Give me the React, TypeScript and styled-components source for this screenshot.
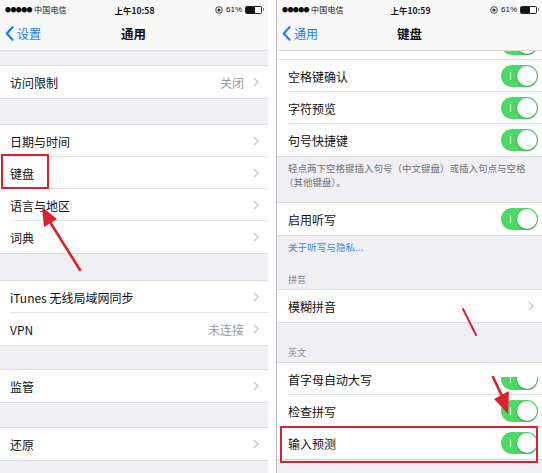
import React from 'react'
import styled, { createGlobalStyle } from 'styled-components'

const GlobalStyle = createGlobalStyle`
  html, body {
    margin: 0;
    padding: 0;
    background: #fff;
  }
  body {
    font-family: 'Liberation Sans', 'Noto Sans CJK SC', sans-serif;
    -webkit-font-smoothing: antialiased;
  }
`

const Screen = styled.div`
  position: relative;
  display: flex;
  width: 542px;
  height: 473px;
  overflow: hidden;
  background: #fff;
`

const Phone = styled.div<{ $width: number; $edge?: boolean }>`
  position: relative;
  display: flex;
  flex-direction: column;
  width: ${(p) => p.$width}px;
  flex-shrink: 0;
  background: #efeff4;
  overflow: hidden;
  ${(p) => (p.$edge ? 'border-left: 1px solid #b9b9bc;' : '')}
`

const Spacer = styled.div`
  width: 8px;
  flex-shrink: 0;
  background: #fff;
`

const Header = styled.header`
  display: flex;
  flex-direction: column;
  height: 50px;
  flex-shrink: 0;
  background: #f8f8f9;
  box-shadow: 0 1px 0 #dcdce0;
  position: relative;
  z-index: 2;
`

const StatusBar = styled.div`
  display: grid;
  grid-template-columns: 1fr auto 1fr;
  align-items: center;
  height: 20px;
  padding: 0 4px 0 5px;
  font-size: 8px;
  color: #111;
`

const Carrier = styled.div`
  display: flex;
  align-items: center;
  gap: 2px;
  font-family: 'Noto Sans CJK SC', sans-serif;
  letter-spacing: 0.2px;
`

const Dots = styled.span`
  font-size: 6px;
  letter-spacing: -0.6px;
`

const Clock = styled.div`
  font-weight: bold;
  font-size: 8.5px;
  font-family: 'Noto Sans CJK SC', sans-serif;
`

const Power = styled.div`
  display: flex;
  align-items: center;
  justify-content: flex-end;
  gap: 3px;
`

const Battery = styled.span`
  position: relative;
  width: 15px;
  height: 6px;
  border: 1px solid #222;
  border-radius: 1.5px;
  background: linear-gradient(to right, #111 62%, #fff 62%);
  margin-right: 2px;

  &::after {
    content: '';
    position: absolute;
    right: -3px;
    top: 1.5px;
    width: 1.5px;
    height: 3px;
    background: #777;
  }
`

const NavBar = styled.div`
  display: grid;
  grid-template-columns: 1fr auto 1fr;
  align-items: center;
  height: 30px;
  padding: 0 6px 2px 5px;
`

const Back = styled.div`
  display: flex;
  align-items: center;
  gap: 3px;
  color: #1a7cf5;
  font-size: 12px;
  font-family: 'Noto Sans CJK SC', sans-serif;
`

const Title = styled.div`
  font-size: 12.5px;
  font-weight: bold;
  font-family: 'Noto Sans CJK SC', sans-serif;
  color: #111;
`

const Band = styled.div<{ $h: number }>`
  height: ${(p) => p.$h}px;
  flex-shrink: 0;
`

const Group = styled.ul`
  list-style: none;
  margin: 0;
  padding: 0;
  background: #fff;
  box-shadow: 0 -1px 0 #dcdce0, 0 1px 0 #dcdce0;
  flex-shrink: 0;
`

const Row = styled.li<{ $inset: number }>`
  position: relative;
  display: flex;
  align-items: center;
  height: 32px;
  padding: 0 5px 0 ${(p) => p.$inset}px;
  font-family: 'Noto Sans CJK SC', sans-serif;
  font-size: 12px;
  color: #111;

  &:not(:last-child)::after {
    content: '';
    position: absolute;
    left: ${(p) => p.$inset}px;
    right: 0;
    bottom: 0;
    height: 1px;
    background: #e3e3e6;
  }
`

const Label = styled.span`
  flex: 1;
`

const Detail = styled.span`
  color: #9a9a9f;
  margin-right: 7px;
`

const ChevronBox = styled.span`
  display: flex;
  width: 10px;
  justify-content: center;
  margin-right: 2px;
`

const PeekRow = styled.div`
  position: relative;
  display: flex;
  justify-content: flex-end;
  height: 9px;
  padding-right: 5px;
  overflow: hidden;
  background: #fff;
  flex-shrink: 0;
  border-bottom: 1px solid #e3e3e6;
`

const Toggle = styled.span<{ $clipTop?: number; $lift?: number }>`
  position: relative;
  display: block;
  width: 37px;
  height: 22px;
  border-radius: 11px;
  background: #4cd964;
  flex-shrink: 0;
  margin-top: ${(p) => (p.$lift ? `-${p.$lift}px` : '0')};
  ${(p) => (p.$clipTop ? `clip-path: inset(${p.$clipTop}px 0 0 0);` : '')}

  &::before {
    content: '';
    position: absolute;
    left: 9px;
    top: 7px;
    width: 1px;
    height: 8px;
    background: rgba(255, 255, 255, 0.8);
  }

  &::after {
    content: '';
    position: absolute;
    right: 1px;
    top: 1px;
    width: 20px;
    height: 20px;
    border-radius: 50%;
    background: #fff;
    box-shadow: 0 1px 2px rgba(0, 0, 0, 0.3), 0 0 0 0.5px rgba(0, 0, 0, 0.08);
  }
`

const Note = styled.div<{ $h: number }>`
  display: flex;
  flex-direction: column;
  justify-content: space-between;
  height: ${(p) => p.$h}px;
  padding: 6px 8px 4px 11px;
  box-sizing: border-box;
  flex-shrink: 0;
  font-family: 'Noto Sans CJK SC', sans-serif;
  font-size: 9.6px;
  line-height: 12px;
  color: #727278;
`

const NoteLines = styled.div`
  display: flex;
  flex-direction: column;
  margin-top: -1px;
`

const NoteLine = styled.div<{ $hang?: boolean }>`
  font-size: 9.5px;
  line-height: 14px;
  white-space: nowrap;
  ${(p) => (p.$hang ? 'margin-left: -4px;' : '')}
`

const Link = styled.div`
  color: #3b8ad8;
`

const SectionTitle = styled.div`
  color: #8a8a90;
  font-size: 9px;
`

const Frame = styled.div<{ $x: number; $y: number; $w: number; $h: number }>`
  position: absolute;
  left: ${(p) => p.$x}px;
  top: ${(p) => p.$y}px;
  width: ${(p) => p.$w}px;
  height: ${(p) => p.$h}px;
  border: 2px solid #d8232c;
  box-sizing: border-box;
  pointer-events: none;
  z-index: 3;
`

const Marks = styled.svg`
  position: absolute;
  left: 0;
  top: 0;
  pointer-events: none;
  z-index: 4;
`

const Chevron = () => (
  <ChevronBox>
    <svg width="6" height="10" viewBox="0 0 6 10">
      <path d="M1 1 L5 5 L1 9" fill="none" stroke="#c7c7cc" strokeWidth="1.4" />
    </svg>
  </ChevronBox>
)

const BackArrow = () => (
  <svg width="9" height="15" viewBox="0 0 9 15">
    <path d="M7.5 1.2 L1.8 7.5 L7.5 13.8" fill="none" stroke="#1a7cf5" strokeWidth="2.2" strokeLinecap="round" strokeLinejoin="round" />
  </svg>
)

const LockIcon = () => (
  <svg width="8" height="8" viewBox="0 0 8 8">
    <circle cx="4" cy="4" r="3.3" fill="none" stroke="#333" strokeWidth="0.9" />
    <circle cx="4" cy="4" r="1.6" fill="#333" />
  </svg>
)

const Status = ({ time }: { time: string }) => (
  <StatusBar>
    <Carrier>
      <Dots>●●●●●</Dots>
      <span>中国电信</span>
    </Carrier>
    <Clock>{time}</Clock>
    <Power>
      <LockIcon />
      <span>61%</span>
      <Battery />
    </Power>
  </StatusBar>
)

const Nav = ({ back, title }: { back: string; title: string }) => (
  <NavBar>
    <Back>
      <BackArrow />
      <span>{back}</span>
    </Back>
    <Title>{title}</Title>
    <span />
  </NavBar>
)

const LinkRow = ({ label, detail }: { label: string; detail?: string }) => (
  <Row $inset={10}>
    <Label>{label}</Label>
    {detail && <Detail>{detail}</Detail>}
    <Chevron />
  </Row>
)

const SwitchRow = ({ label, clipTop }: { label: string; clipTop?: number }) => (
  <Row $inset={11}>
    <Label>{label}</Label>
    <Toggle $clipTop={clipTop} />
  </Row>
)

const General = () => (
  <Phone $width={268}>
    <Header>
      <Status time="上午10:58" />
      <Nav back="设置" title="通用" />
    </Header>
    <Band $h={16} />
    <Group>
      <LinkRow label="访问限制" detail="关闭" />
    </Group>
    <Band $h={27} />
    <Group>
      <LinkRow label="日期与时间" />
      <LinkRow label="键盘" />
      <LinkRow label="语言与地区" />
      <LinkRow label="词典" />
    </Group>
    <Band $h={28} />
    <Group>
      <LinkRow label="iTunes 无线局域网同步" />
      <LinkRow label="VPN" detail="未连接" />
    </Group>
    <Band $h={25} />
    <Group>
      <LinkRow label="监管" />
    </Group>
    <Band $h={26} />
    <Group>
      <LinkRow label="还原" />
    </Group>
    <Frame $x={1} $y={154} $w={48} $h={35} />
  </Phone>
)

const Keyboard = () => (
  <Phone $width={266} $edge>
    <Header>
      <Status time="上午10:59" />
      <Nav back="通用" title="键盘" />
    </Header>
    <PeekRow>
      <Toggle $lift={17} />
    </PeekRow>
    <Group>
      <SwitchRow label="空格键确认" />
      <SwitchRow label="字符预览" />
      <SwitchRow label="句号快捷键" />
    </Group>
    <Note $h={47}>
      <NoteLines>
        <NoteLine>轻点两下空格键插入句号（中文键盘）或插入句点与空格</NoteLine>
        <NoteLine $hang>（其他键盘）。</NoteLine>
      </NoteLines>
    </Note>
    <Group>
      <SwitchRow label="启用听写" />
    </Group>
    <Note $h={55}>
      <Link>关于听写与隐私...</Link>
      <SectionTitle>拼音</SectionTitle>
    </Note>
    <Group>
      <Row $inset={11}>
        <Label>模糊拼音</Label>
        <Chevron />
      </Row>
    </Group>
    <Note $h={41}>
      <span />
      <SectionTitle>英文</SectionTitle>
    </Note>
    <Group>
      <SwitchRow label="首字母自动大写" clipTop={9} />
      <SwitchRow label="检查拼写" />
      <SwitchRow label="输入预测" />
    </Group>
    <Frame $x={3} $y={426} $w={258} $h={37} />
  </Phone>
)

export default function App() {
  return (
    <>
      <GlobalStyle />
      <Screen>
        <General />
        <Spacer />
        <Keyboard />
        <Marks width="542" height="473" viewBox="0 0 542 473">
          <g stroke="#d8232c" strokeWidth="2.6" strokeLinecap="round" fill="#d8232c">
            <line x1="80" y1="270" x2="50" y2="222" />
            <polygon points="42,207 44,227 57,219" stroke="none" />
            <line x1="463" y1="309" x2="476" y2="335" strokeWidth="2" />
            <line x1="493" y1="377" x2="502" y2="396" />
            <polygon points="508,414 494,399 509,391" stroke="none" />
          </g>
        </Marks>
      </Screen>
    </>
  )
}
